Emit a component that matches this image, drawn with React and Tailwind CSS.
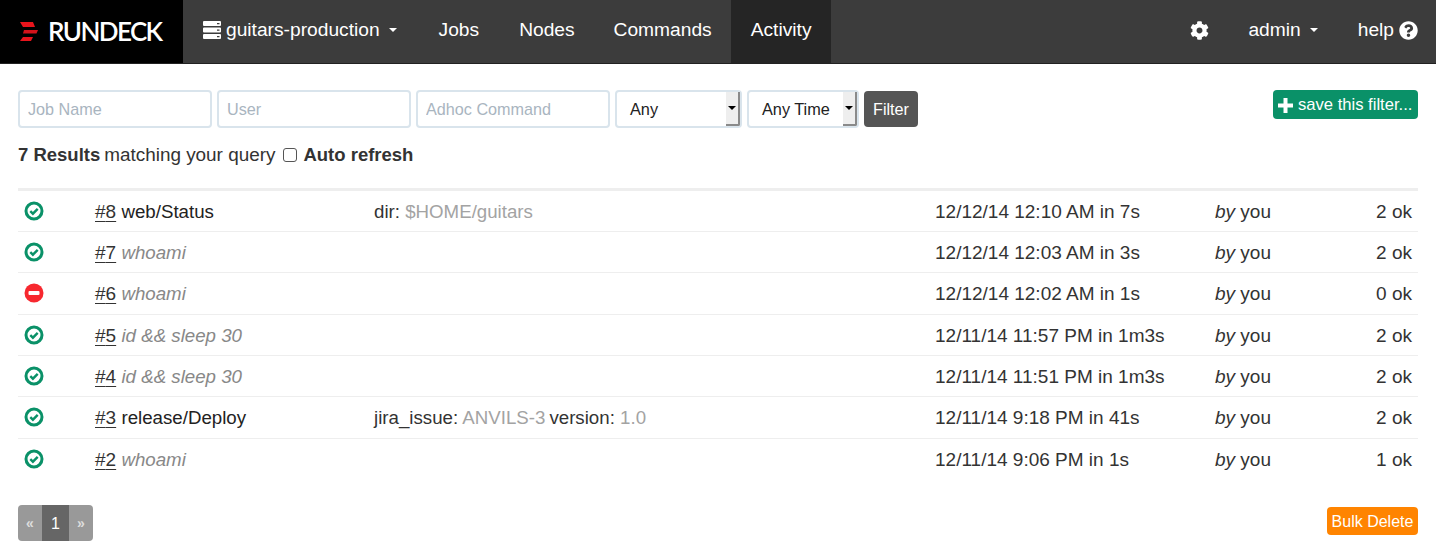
import { FaCog, FaQuestionCircle } from 'react-icons/fa'

const rows = [
  { id: 8, name: 'web/Status', args: [['dir:', '$HOME/guitars']], date: '12/12/14 12:10 AM in 7s', ok: '2 ok', h: 'h-[41px] pt-[2px]' },
  { id: 7, name: 'whoami', adhoc: true, date: '12/12/14 12:03 AM in 3s', ok: '2 ok', h: 'h-[41px] pt-[2px]' },
  { id: 6, name: 'whoami', adhoc: true, failed: true, date: '12/12/14 12:02 AM in 1s', ok: '0 ok', h: 'h-[42px] pt-[1px]' },
  { id: 5, name: 'id && sleep 30', adhoc: true, date: '12/11/14 11:57 PM in 1m3s', ok: '2 ok', h: 'h-[41px] pt-[2px]' },
  { id: 4, name: 'id && sleep 30', adhoc: true, date: '12/11/14 11:51 PM in 1m3s', ok: '2 ok', h: 'h-[41px] pt-[2px]' },
  { id: 3, name: 'release/Deploy', args: [['jira_issue:', 'ANVILS-3'], ['version:', '1.0']], date: '12/11/14 9:18 PM in 41s', ok: '2 ok', h: 'h-[42px] pt-[1px]' },
  { id: 2, name: 'whoami', adhoc: true, date: '12/11/14 9:06 PM in 1s', ok: '1 ok', h: 'h-[41px] pt-[1px]' },
]

function Caret() {
  return <span className="inline-block w-0 h-0 border-x-[4px] border-x-transparent border-t-[4px] border-t-white" />
}

function ServerIcon() {
  return (
    <svg width="18" height="18" viewBox="0 0 18 18" fill="white">
      <path d="M1 0h16a1 1 0 0 1 1 1v3a1 1 0 0 1-1 1H1a1 1 0 0 1-1-1V1a1 1 0 0 1 1-1zm13 2v1.2h2.5V2z" fillRule="evenodd" />
      <path d="M1 6.5h16a1 1 0 0 1 1 1v3a1 1 0 0 1-1 1H1a1 1 0 0 1-1-1v-3a1 1 0 0 1 1-1zm13 2v1.2h2.5V8.5z" fillRule="evenodd" />
      <path d="M1 13h16a1 1 0 0 1 1 1v3a1 1 0 0 1-1 1H1a1 1 0 0 1-1-1v-3a1 1 0 0 1 1-1zm13 2v1.2h2.5V15z" fillRule="evenodd" />
    </svg>
  )
}

function StatusIcon({ failed }) {
  if (failed) {
    return (
      <svg width="20" height="20" viewBox="0 0 20 20">
        <circle cx="10" cy="10" r="9.5" fill="#f7282f" />
        <rect x="4.5" y="8" width="11" height="4" rx="1" fill="white" />
      </svg>
    )
  }
  return (
    <svg width="20" height="20" viewBox="0 0 20 20" fill="none">
      <circle cx="10" cy="10" r="8" stroke="#0a9168" strokeWidth="3" />
      <path d="M6.3 10.2l2.6 2.5 4.8-4.8" stroke="#0a9168" strokeWidth="2.4" />
    </svg>
  )
}

function FakeSelect({ label, width }) {
  return (
    <div className={`${width} h-[38px] flex border-2 border-[#d9e4ec] rounded-[4px] bg-white`}>
      <span className="flex-1 pl-[13px] leading-[35px] text-[16.3px] text-[#222]">{label}</span>
      <span className="w-[14px] h-[34px] flex items-center justify-center bg-[#eeeeee] border-r-2 border-b-2 border-[#8a8a8a] rounded-br-[2px]">
        <span className="w-0 h-0 border-x-[4px] border-x-transparent border-t-[4px] border-t-black" />
      </span>
    </div>
  )
}

export default function App() {
  return (
    <div className="w-[1436px] h-[558px] overflow-hidden bg-white text-[#333] font-['Liberation_Sans',Arial,sans-serif]">
      <nav className="h-[64px] flex bg-[#3c3c3c] border-b border-[#222] text-white text-[19.2px]">
        <div className="w-[183px] bg-black flex items-center pl-[20px] gap-[10px] pb-[1px]">
          <svg width="18" height="19" viewBox="0 0 18 19" fill="#e8141c" className="shrink-0">
            <polygon points="0,0 13,0 15,5 3,5" />
            <polygon points="4,8 18,8 16.5,11.5 3,11.5" fill="#d4121a" />
            <polygon points="3,15 13,15 11,19 0,19" />
          </svg>
          <span className="font-['Lato',sans-serif] font-semibold text-[26px] leading-none tracking-[-1.6px]">RUNDECK</span>
        </div>
        <div className="flex items-center gap-[5px] pl-[20px] pr-[22px] pb-[3px]">
          <ServerIcon />
          <span>guitars-production</span>
          <span className="ml-[4px] flex items-center"><Caret /></span>
        </div>
        <div className="flex items-center px-[20px] pb-[3px]">Jobs</div>
        <div className="flex items-center px-[20px] pb-[3px]">Nodes</div>
        <div className="flex items-center px-[19px] pb-[3px]">Commands</div>
        <div className="flex items-center px-[20px] pb-[3px] bg-[#252525]">Activity</div>
        <div className="ml-auto flex items-center pr-[18px] pb-[3px]">
          <FaCog size={19} />
          <span className="ml-[39px]">admin</span>
          <span className="ml-[9px] flex items-center"><Caret /></span>
          <span className="ml-[40px]">help</span>
          <FaQuestionCircle size={19} className="ml-[5px]" />
        </div>
      </nav>

      <main className="px-[18px]">
        <div className="pt-[26px] flex items-start justify-between">
          <div className="flex items-center gap-[5px] text-[16.2px]">
            {['Job Name', 'User', 'Adhoc Command'].map(p => (
              <input
                key={p}
                placeholder={p}
                className="w-[194px] h-[38px] px-[8px] pt-[1px] border-2 border-[#d9e4ec] rounded-[4px] outline-none placeholder:text-[#a9b5bf]"
              />
            ))}
            <FakeSelect label="Any" width="w-[127px]" />
            <FakeSelect label="Any Time" width="w-[112px]" />
            <button className="h-[36px] w-[54px] pt-[1px] bg-[#555555] text-white rounded-[4px] text-[16.2px]">Filter</button>
          </div>
          <button className="h-[29px] w-[145px] flex items-center pl-[5px] pt-[1px] gap-[5px] bg-[#0a9168] text-white rounded-[4px] text-[16.6px] font-medium whitespace-nowrap">
            <svg width="15" height="15" viewBox="0 0 15 15" fill="white" className="shrink-0">
              <path d="M5.5 0h4v5.5H15v4H9.5V15h-4V9.5H0v-4h5.5z" />
            </svg>
            <span>save this filter...</span>
          </button>
        </div>

        <div className="mt-[15px] flex items-center h-[24px] text-[18.5px] leading-none">
          <b>7 Results</b>
          <span className="ml-[4px] text-[18.9px]">matching your query</span>
          <input type="checkbox" className="ml-[8px] w-[14px] h-[14px] appearance-none border border-[#555] rounded-[3px] bg-white" />
          <b className="ml-[6px]">Auto refresh</b>
        </div>

        <div className="mt-[21px] border-t-[3px] border-[#eeeeee] text-[19px]">
          {rows.map((r, i) => (
            <div key={r.id} className={`${r.h} flex items-center ${i < rows.length - 1 ? 'border-b border-[#eeeeee]' : ''}`}>
              <div className="w-[77px] pl-[6px] -mt-[3px]"><StatusIcon failed={r.failed} /></div>
              <div className="w-[279px] whitespace-nowrap">
                <span className="underline underline-offset-[3px]">#{r.id}</span>{' '}
                <span className={`text-[18.7px] ${r.adhoc ? 'italic text-[#888888]' : 'text-[#222]'}`}>{r.name}</span>
              </div>
              <div className="w-[561px] whitespace-nowrap text-[18.7px]">
                {r.args && r.args.map(([k, v]) => (
                  <span key={k} className="mr-[4px]">{k} <span className="text-[#a3a3a3]">{v}</span></span>
                ))}
              </div>
              <div className="w-[280px] whitespace-nowrap">{r.date}</div>
              <div className="w-[100px]"><i>by</i> you</div>
              <div className="flex-1 text-right pr-[6px]">{r.ok}</div>
            </div>
          ))}
        </div>

        <div className="mt-[25px] flex items-start justify-between">
          <div className="flex h-[36px] rounded-[4px] overflow-hidden text-white">
            <span className="w-[24px] bg-[#999999] flex items-center justify-center text-[14px] text-[#dddddd] font-bold">«</span>
            <span className="w-[27px] bg-[#666666] flex items-center justify-center pt-[1px] text-[16px]">1</span>
            <span className="w-[24px] bg-[#999999] flex items-center justify-center text-[14px] text-[#dddddd] font-bold">»</span>
          </div>
          <button className="h-[28px] w-[91px] mt-[2px] pt-[1px] bg-[#ff8400] text-white rounded-[4px] text-[16px]">Bulk Delete</button>
        </div>
      </main>
    </div>
  )
}
